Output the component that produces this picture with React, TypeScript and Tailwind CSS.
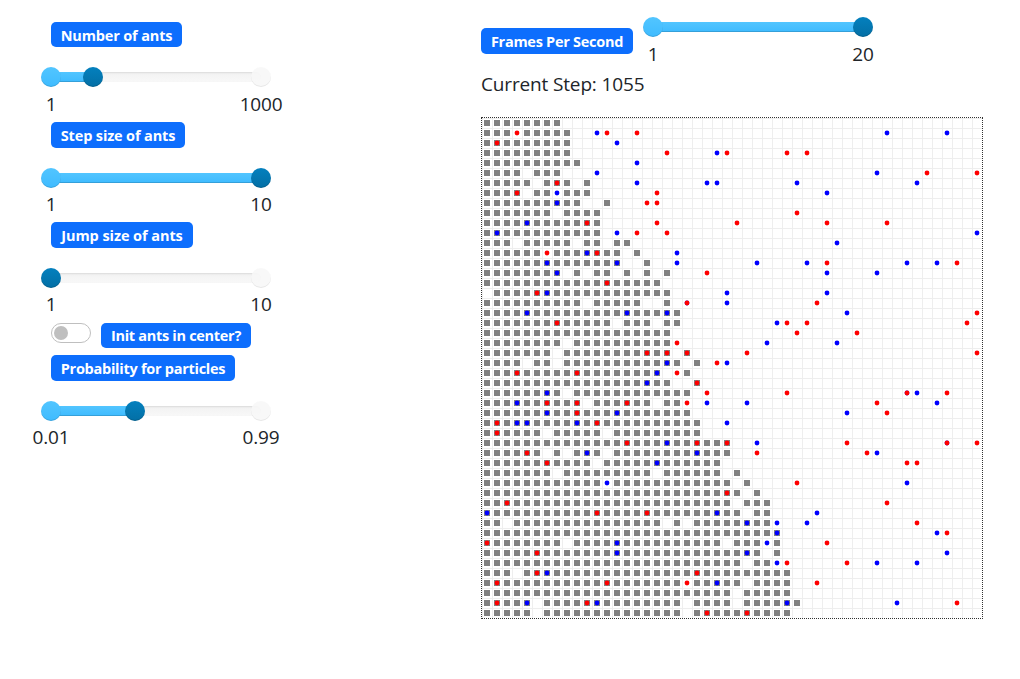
import React from "react";

const FONT = "font-['Segoe_UI','Open_Sans','Noto_Sans',sans-serif]";

// Occupied cells per grid row, as inclusive column ranges.
const PARTICLES: string[] = [
  "0-7",
  "0-2,4-8",
  "0-8",
  "0-8",
  "0-9",
  "0-3,5-7",
  "0-4,6-8,10",
  "0-3,5-6,8-10",
  "0-9,12",
  "0-6,8-11",
  "0-11",
  "0-11",
  "0-2,4-8,10-11,13-14",
  "0-5,7-13,15",
  "0-13,16",
  "0-7,9,11-12,14,16,18",
  "0-17",
  "1-18",
  "0-9,11-15,18",
  "0-19",
  "0-12,14-16,18-19",
  "0-18",
  "0-7,9-18",
  "0-6,8-18,20",
  "0-3,5-6,8-19,21",
  "0-17,20",
  "0-18,21",
  "0-7,9-20",
  "0-9,11-16,18-19",
  "0-20",
  "0-21",
  "0-5,7-11,13-21",
  "0-24",
  "0-5,7,9-11,13-24",
  "0-10,12-23",
  "0-6,8-16,18-23,25",
  "0-11,13-24,26",
  "0-25,27",
  "0-24,26-28",
  "0-25,27-28",
  "0-1,3-17,19,21-28",
  "0-29",
  "0-7,9-23,25-27,29",
  "0-27,29",
  "0-25,27-28",
  "0-2,4-30",
  "0-19,21-25,27-30",
  "0-24,26-30",
  "0-4,6-19,21-24,26-31",
  "0-4,6-19,21-30",
];

// Ants per grid row: "b" is searching, "r" is carrying a particle.
const ANTS: string[] = [
  "",
  "r3 b11 r12 r15 b40 b46",
  "r1 b13",
  "r18 b23 r24 r30 r32",
  "b15",
  "b11 b39 r44 r49",
  "r7 b15 b22 b23 b31 b43",
  "r3 b7 r17 b34",
  "b7 r16 r17",
  "r31",
  "b4 r10 r17 r25 r34 r40",
  "b1 b13 r15 r18 b49",
  "b35",
  "r6 b10 r11 b19",
  "b6 b13 b19 b27 b32 r34 b42 b45 r47",
  "b7 r22 b34 b39",
  "r12",
  "r5 b6 b24 b34",
  "b20 r20 b24 r33",
  "b4 b14 b18 b36 r49",
  "r7 b29 r30 r32 r48",
  "r31 r37",
  "r19 b28 b35",
  "r16 r18 r20 r26 r49",
  "b18 r23 b24",
  "r3 r9 b17 r19",
  "b16 r21",
  "b6 r22 r30 b42 r42 b43 r46",
  "b3 r6 r9 r14 r20 b22 b26 r39 b45",
  "b6 r9 b13 b36 r40",
  "r1 b3 b4 b9 r11 b24",
  "r1",
  "r14 b18 r21 r24 b27 r36 b46 r46 r49",
  "r4 b10 b21 r27 r38 b39",
  "r6 b17 r42 r43",
  "",
  "b12 r31 b42",
  "r24",
  "r2 r40",
  "b0 r11 r16 b23 b33",
  "b26 b29 b32 r43",
  "b29 b45 r46",
  "r0 b13 b28 r34",
  "r5 b13 b26 b46",
  "b29 r30 r36 b39 b43",
  "r5 b6 r21",
  "r1 r12 r20 b23 r33",
  "",
  "r1 b4 r10 b11 b30 b41 r47",
  "r22 r26",
];

function columns(ranges: string): number[] {
  return ranges.split(",").flatMap((range) => {
    const [from, to = from] = range.split("-").map(Number);
    return Array.from({ length: to - from + 1 }, (_, i) => from + i);
  });
}

function World() {
  const lines = Array.from({ length: 50 }, (_, i) => i * 10 + 0.5);
  return (
    <div className="h-[502px] w-[502px] border border-dotted border-[#333333]">
      <svg width="500" height="500" className="block">
        {lines.map((p) => (
          <path key={p} d={`M${p} 0V500M0 ${p}H500`} stroke="#eeeeee" />
        ))}
        {PARTICLES.map((ranges, row) =>
          columns(ranges).map((col) => (
            <rect key={`${row}-${col}`} x={col * 10 + 2} y={row * 10 + 2} width="6" height="6" fill="#808080" />
          )),
        )}
        {ANTS.map((ants, row) =>
          ants
            .split(" ")
            .filter(Boolean)
            .map((ant) => (
              <circle
                key={`${row}-${ant}`}
                cx={Number(ant.slice(1)) * 10 + 5}
                cy={row * 10 + 5}
                r="2.4"
                fill={ant[0] === "r" ? "#ff0000" : "#0000ff"}
              />
            )),
        )}
      </svg>
    </div>
  );
}

function Badge({ className, children }: { className: string; children: React.ReactNode }) {
  return (
    <span
      className={`flex shrink-0 items-center justify-center rounded-[5px] bg-[#0d6efd] text-[14.5px] leading-none font-bold whitespace-nowrap text-white ${className}`}
    >
      {children}
    </span>
  );
}

type SliderProps = { min: string; max: string; value: number; labelPadding?: string };

function Slider({ min, max, value, labelPadding = "pt-[4px]" }: SliderProps) {
  const thumb = "absolute top-0 size-5 -translate-x-1/2 rounded-full";
  return (
    <div className="w-[210px]">
      <div className="relative h-5 pt-[5px]">
        <div className="h-2.5 rounded-[5px] bg-linear-to-b from-[#f2f2f2] to-[#f8f8f8] shadow-[inset_0_1px_2px_rgba(0,0,0,0.1)]">
          <div
            className="h-2.5 rounded-l-[5px] bg-linear-to-b from-[#52c5ff] to-[#3ebbff] shadow-[inset_0_-1px_0_rgba(0,0,0,0.15)]"
            style={{ width: `${value}%` }}
          />
        </div>
        {value > 0 && (
          <span
            className={`${thumb} left-0 bg-linear-to-b from-[#52c5ff] to-[#3ebbff] shadow-[inset_0_-1px_0_rgba(0,0,0,0.13)]`}
          />
        )}
        {value < 100 && (
          <span className={`${thumb} left-full bg-[#f7f7f7]/90 shadow-[inset_0_-1px_0_rgba(0,0,0,0.07)]`} />
        )}
        <span
          className={`${thumb} bg-linear-to-b from-[#0480be] to-[#036fa5] shadow-[inset_0_-1px_0_rgba(0,0,0,0.15)]`}
          style={{ left: `${value}%` }}
        />
      </div>
      <div
        className={`flex h-[30px] items-center justify-between text-[19px] leading-none tracking-[-0.2px] ${labelPadding}`}
      >
        <span className="flex w-0 justify-center">{min}</span>
        <span className="flex w-0 justify-center">{max}</span>
      </div>
    </div>
  );
}

export default function App() {
  return (
    <main className={`flex h-[679px] w-[1020px] bg-white text-[#212529] ${FONT}`}>
      <section className="flex w-[481px] flex-col items-start pt-[22px] pl-[51px]">
        <div className="h-[100px]">
          <Badge className="mb-5 h-[25px] w-[131px] pt-[3px] tracking-[-0.15px]">Number of ants</Badge>
          <Slider min="1" max="1000" value={20} />
        </div>
        <div className="h-[100px]">
          <Badge className="mb-5 h-[26px] w-[134px] pt-[2px] tracking-[-0.15px]">Step size of ants</Badge>
          <Slider min="1" max="10" value={100} labelPadding="pt-[2px]" />
        </div>
        <div className="h-[101px]">
          <Badge className="mb-5 h-[26px] w-[142px] pt-[2px] tracking-[-0.07px]">Jump size of ants</Badge>
          <Slider min="1" max="10" value={0} labelPadding="pt-[2px]" />
        </div>
        <div className="flex h-8 items-start gap-2.5">
          <span className="flex h-5 w-10 items-center rounded-full border border-[#bfbfbf] bg-white pl-0.5">
            <span className="size-3.5 rounded-full bg-[#bfbfbf]" />
          </span>
          <Badge className="h-[25px] w-[150px] pt-[2px] tracking-[-0.3px]">Init ants in center?</Badge>
        </div>
        <Badge className="mb-5 h-[26px] w-[184px] pt-[2px] tracking-[-0.27px]">Probability for particles</Badge>
        <Slider min="0.01" max="0.99" value={40} labelPadding="pt-[2px]" />
      </section>
      <section className="pt-[17px]">
        <div className="flex h-[50px] gap-5">
          <Badge className="mt-[11px] h-[26px] w-[152px] pt-[2px] tracking-[-0.27px]">Frames Per Second</Badge>
          <Slider min="1" max="20" value={100} />
        </div>
        <p className="mb-[18px] flex h-8 items-center pt-[3px] text-[19px] leading-none tracking-[-0.15px]">
          Current Step: 1055
        </p>
        <World />
      </section>
    </main>
  );
}
